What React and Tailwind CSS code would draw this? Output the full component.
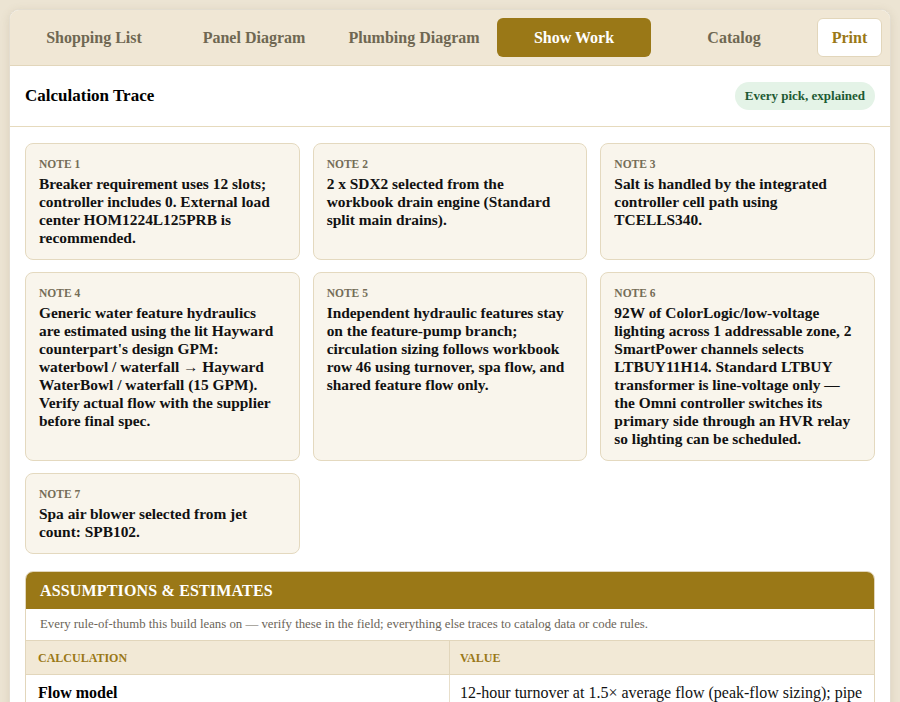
import React from "react";

const tabs = ["Shopping List", "Panel Diagram", "Plumbing Diagram", "Show Work", "Catalog"];

// each note is kept as its printed lines so the cards wrap the same way
const notes = [
  ["Breaker requirement uses 12 slots;", "controller includes 0. External load", "center HOM1224L125PRB is", "recommended."],
  ["2 x SDX2 selected from the", "workbook drain engine (Standard", "split main drains)."],
  ["Salt is handled by the integrated", "controller cell path using", "TCELLS340."],
  [
    "Generic water feature hydraulics",
    "are estimated using the lit Hayward",
    "counterpart's design GPM:",
    "waterbowl / waterfall → Hayward",
    "WaterBowl / waterfall (15 GPM).",
    "Verify actual flow with the supplier",
    "before final spec.",
  ],
  [
    "Independent hydraulic features stay",
    "on the feature-pump branch;",
    "circulation sizing follows workbook",
    "row 46 using turnover, spa flow, and",
    "shared feature flow only.",
  ],
  [
    "92W of ColorLogic/low-voltage",
    "lighting across 1 addressable zone, 2",
    "SmartPower channels selects",
    "LTBUY11H14. Standard LTBUY",
    "transformer is line-voltage only —",
    "the Omni controller switches its",
    "primary side through an HVR relay",
    "so lighting can be scheduled.",
  ],
  ["Spa air blower selected from jet", "count: SPB102."],
];

const rows = [
  ["Flow model", "12-hour turnover at 1.5× average flow (peak-flow sizing); pipe velocity capped at 6 ft/s suction and 8 ft/s return."],
  ["Head loss", "Estimated from equivalent pipe length and fitting counts per workbook defaults."],
];

export default function App() {
  return (
    <div
      className="min-h-[702px] bg-[#ece4d3] pt-[9px] pl-[9px] pr-[9px]"
      style={{ fontFamily: '"Liberation Serif", "Times New Roman", serif' }}
    >
      <div className="bg-white rounded-t-[10px] border border-[#e3ddd0] shadow-[0_2px_10px_rgba(120,100,60,0.15)] overflow-hidden">
        {/* Tab bar */}
        <div className="flex items-center gap-1.5 h-[56px] px-[7px] bg-[#f0e7d5] border-b border-[#e2d6bb]">
          {tabs.map((t) => (
            <div
              key={t}
              className={
                t === "Show Work"
                  ? "w-[154px] h-[39px] flex items-center justify-center rounded-md bg-[#9a7817] text-white text-[16px] font-bold"
                  : "w-[154px] h-[39px] flex items-center justify-center text-[16px] font-bold text-[#6f6752]"
              }
            >
              {t}
            </div>
          ))}
          <div className="w-[65px] h-[39px] flex items-center justify-center rounded-md bg-white border border-[#e2d6bb] text-[16px] font-bold text-[#9a7817]">
            Print
          </div>
        </div>

        {/* Header */}
        <div className="flex items-center justify-between h-[61px] px-[15px] border-b border-[#e6dabd]">
          <div className="text-[17px] font-bold text-black">Calculation Trace</div>
          <div className="h-[28px] px-[10px] flex items-center rounded-full bg-[#e4f3e7] text-[13px] font-bold text-[#1d5a33]">
            Every pick, explained
          </div>
        </div>

        <div className="px-[15px] pt-[16px]">
          {/* Notes grid */}
          <div className="grid grid-cols-3 gap-x-[13px] gap-y-[12px] items-stretch">
            {notes.map((lines, i) => (
              <div
                key={i}
                className="rounded-lg bg-[#f9f5ec] border border-[#e4d9bf] px-[13px] pt-[13px] pb-[12px]"
              >
                <div className="text-[11.5px] font-bold uppercase text-[#756d57] leading-[14px] mb-[4px]">
                  Note {i + 1}
                </div>
                <div className="text-[15.4px] font-bold text-[#111] leading-[18px]">
                  {lines.map((l, j) => (
                    <span key={j} className="block whitespace-nowrap">
                      {l}{j < lines.length - 1 ? " " : ""}
                    </span>
                  ))}
                </div>
              </div>
            ))}
          </div>

          {/* Assumptions */}
          <div className="mt-[17px] rounded-t-lg border border-[#e2d6bb] overflow-hidden">
            <div className="h-[37px] flex items-center px-[14px] bg-[#9a7817] text-white text-[16px] font-bold uppercase tracking-[0.01em]">
              Assumptions &amp; Estimates
            </div>
            <div className="h-[32px] flex items-center px-[14px] text-[12.8px] text-[#6b6559] border-b border-[#e2d6bb]">
              Every rule-of-thumb this build leans on — verify these in the field; everything else traces to catalog data or code rules.
            </div>
            <div className="grid grid-cols-[424px_1fr]">
              <div className="h-[34px] flex items-center px-[12px] bg-[#f2e9d6] border-b border-r border-[#e2d6bb] text-[12px] font-bold uppercase text-[#9a7817]">
                Calculation
              </div>
              <div className="h-[34px] flex items-center px-[10px] bg-[#f2e9d6] border-b border-[#e2d6bb] text-[12px] font-bold uppercase text-[#9a7817]">
                Value
              </div>
              {rows.map(([k, v]) => (
                <React.Fragment key={k}>
                  <div className="px-[12px] py-[9px] border-b border-r border-[#e8dfcb] text-[16px] font-bold text-black leading-[18px]">
                    {k}
                  </div>
                  <div className="px-[10px] py-[9px] border-b border-[#e8dfcb] text-[16px] text-[#111] leading-[18px]">
                    {v}
                  </div>
                </React.Fragment>
              ))}
            </div>
          </div>
          <div className="h-[20px]" />
        </div>
      </div>
    </div>
  );
}
